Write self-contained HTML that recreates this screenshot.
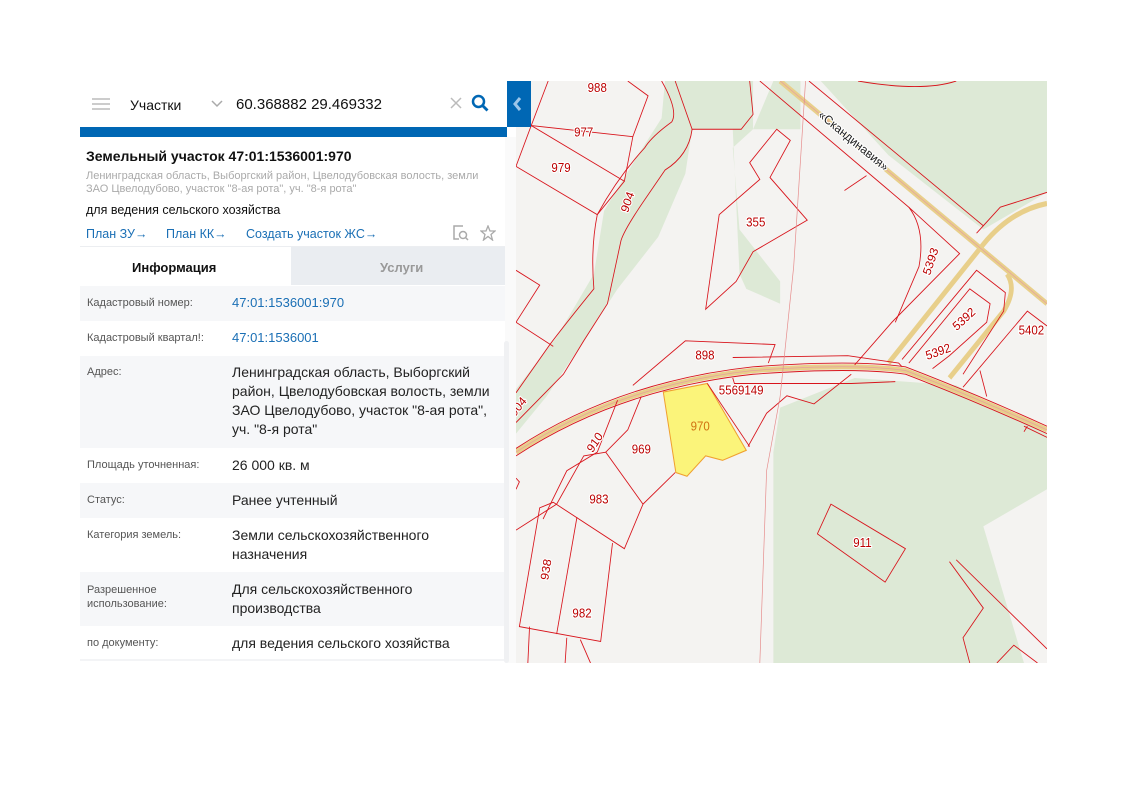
<!DOCTYPE html>
<html><head><meta charset="utf-8"><style>
*{box-sizing:border-box;margin:0;padding:0}
body{width:1122px;height:793px;background:#fff;position:relative;overflow:hidden;font-family:"Liberation Sans",sans-serif}
#map{position:absolute;left:516px;top:81px;width:531px;height:582px;background:#f4f3f1;overflow:hidden}
#panel{position:absolute;left:80px;top:81px;width:436px;height:582px;background:#fff;overflow:hidden}
.search{height:46px;background:#fff;position:relative;width:427px}
.blue{position:absolute;left:0;top:46px;width:427px;height:10px;background:#0067b4}
.coll{position:absolute;left:507px;top:81px;width:24px;height:46px;background:#0067b4}
.t{position:absolute;white-space:nowrap}
.row{position:absolute;left:0;width:425px}
.g{background:#f6f7f9}
.lab{position:absolute;left:7px;font-size:11px;color:#555}
.val{position:absolute;left:152px;font-size:14px;color:#222;line-height:19px}
.lnk{color:#1a6fb5}
</style></head><body>
<div id="map">
<svg width="531" height="582" viewBox="0 0 1568 1568" preserveAspectRatio="none">
<g fill="#dde9d6">
<path d="M440 0 L700 0 L700 130 L520 130 L500 250 L420 420 L300 560 L200 700 L90 850 L0 950 L0 830 L120 690 L230 520 L260 350 L360 200 L430 100Z"/>
<path d="M640 130 L840 130 L840 0 L760 0 L700 130 L640 180 L660 400 L780 540 L780 600 L680 560 L660 520 Z"/>
<path d="M900 0 L1568 0 L1568 300 L1380 400 L1100 200 Z"/>
<path d="M780 880 L1000 800 L1300 820 L1568 950 L1568 1568 L760 1568 L760 1000 Z"/>
</g>
<path d="M1380 1200 L1568 1100 L1568 1568 L1500 1568 Z" fill="#f4f3f1"/>
<g fill="none" stroke="#e8cf8a" stroke-width="14">
<path d="M0 1000 Q300 820 700 780 Q1000 760 1150 780 Q1350 850 1568 940"/>
<path d="M780 0 L1568 600"/>
<path d="M1100 760 L1380 440 Q1460 350 1568 330"/>
<path d="M1280 800 L1440 620 Q1480 560 1450 520"/>
</g>
<g fill="none" stroke="#e6a0a0" stroke-width="2"><path d="M0 1000 Q300 820 700 780 Q1000 760 1150 780 Q1350 850 1568 940"/><path d="M780 0 L1568 600"/></g>
<path d="M435 838 L565 815 L680 995 L610 1022 L560 1010 L505 1065 L472 1055 Z" fill="#fbf47a" stroke="#f0a030" stroke-width="3"/>
<g fill="none" stroke="#d8141c" stroke-width="2.5">
<path d="M95 0 L45 120 L0 230"/><path d="M45 120 L345 150 L390 40 L330 0"/><path d="M0 230 L240 360 L320 270 L45 120"/><path d="M345 150 L320 270"/>
<path d="M430 0 Q480 80 460 110 Q400 150 380 180 Q300 260 240 360 Q220 450 230 560 Q150 650 100 710 L0 840"/>
<path d="M0 510 L70 550 L0 650 L110 715"/>
<path d="M470 0 L520 130 L665 130 L700 90 L690 0"/>
<path d="M520 130 Q510 200 440 240 L380 320 Q320 400 310 430 L270 600 L200 700 L140 790 L0 920"/>
<path d="M560 615 L600 360 L720 265 L690 220 L770 130 L810 160 L750 260 L860 375 L700 460 L650 540 Z"/>
<path d="M720 0 L1160 340 L1310 465 L1110 650 L1000 765"/>
<path d="M865 0 L1380 390 L1360 410"/><path d="M1380 390 L1430 340 L1568 300"/>
<path d="M1160 340 Q1210 400 1190 500 L1120 650"/>
<path d="M1010 0 Q1200 30 1300 0"/>
<path d="M1140 750 L1360 510 L1445 570 L1440 620 L1320 790"/><path d="M1160 760 L1340 560 L1400 600 L1390 650 L1280 740 L1230 775"/>
<path d="M1320 825 L1510 620 L1568 660"/><path d="M1370 780 L1390 850"/>
<path d="M345 820 L500 700 L765 710 L745 760"/>
<path d="M640 745 L980 740 L1130 760 L1140 770"/>
<path d="M640 800 L645 815 L990 815 L1120 810"/>
<path d="M0 1010 Q300 830 700 790 Q1000 770 1150 790 Q1350 860 1568 950"/>
<path d="M0 990 Q300 810 700 770 Q1000 750 1150 770 Q1350 840 1568 930"/>
<path d="M990 790 L880 870 L800 848 L740 895 L685 985"/>
<path d="M565 815 L690 985"/>
<path d="M370 850 L330 940 L265 1000 L375 1140 L470 1055"/><path d="M265 1000 L200 1010 L120 1140 L0 1210"/><path d="M300 860 L240 1000 L150 1050 L80 1180"/>
<path d="M375 1140 L320 1260 L110 1135 L70 1150 L10 1470 L250 1510 L285 1245"/><path d="M180 1175 L120 1490"/>
<path d="M40 1470 L35 1568"/><path d="M150 1500 L145 1568"/><path d="M190 1505 L220 1568"/>
<path d="M930 1140 L1150 1260 L1090 1350 L890 1220 Z" stroke-linejoin="round"/>
<path d="M1280 1295 L1380 1420 L1320 1500 L1340 1568"/><path d="M1300 1290 L1568 1530"/><path d="M1420 1568 L1470 1520 L1540 1568"/>
<path d="M1500 930 L1568 960"/><path d="M1510 930 L1500 945"/>
<path d="M0 1070 L10 1080 L0 1100"/>
<path d="M970 295 L1035 255"/>
</g>
<path d="M855 0 L820 500 L780 850 L740 1050 L720 1568" fill="none" stroke="#e58a8a" stroke-width="2"/>
<g font-family="Liberation Sans,sans-serif" font-size="34" fill="#b00" text-anchor="middle" stroke="#fff" stroke-width="6" paint-order="stroke">
<text x="240" y="30">988</text><text x="200" y="150">977</text><text x="133" y="245">979</text>
<text x="708" y="392">355</text><text x="558" y="750">898</text><text x="665" y="844">5569149</text>
<text x="544" y="942" fill="#d07010" stroke="none">970</text><text x="370" y="1003">969</text><text x="245" y="1138">983</text>
<text x="195" y="1446">982</text><text x="1023" y="1256">911</text><text x="1522" y="683">5402</text>
<text x="1250" y="740" transform="rotate(-18 1250 740)">5392</text>
<text x="1330" y="650" transform="rotate(-40 1330 650)">5392</text>
<text x="1235" y="490" transform="rotate(-70 1235 490)">5393</text>
<text x="340" y="330" transform="rotate(-70 340 330)">904</text>
<text x="242" y="980" transform="rotate(-55 242 980)">910</text>
<text x="100" y="1318" transform="rotate(-80 100 1318)">938</text>
<text x="15" y="885" transform="rotate(-50 15 885)">904</text>
<text x="990" y="170" fill="#222" transform="rotate(37 990 170)">«Скандинавия»</text>
</g>
</svg>
</div>
<div id="panel">
 <div class="search">
  <svg class="t" style="left:12px;top:16px" width="18" height="14"><g stroke="#ccc" stroke-width="2"><path d="M0 2H18M0 7H18M0 12H18"/></g></svg>
  <div class="t" style="left:50px;top:16px;font-size:14px;color:#111">Участки</div>
  <svg class="t" style="left:131px;top:19px" width="12" height="8"><path d="M1 1L6 6L11 1" stroke="#aaa" stroke-width="1.5" fill="none"/></svg>
  <div class="t" style="left:156px;top:15px;font-size:15px;color:#111">60.368882 29.469332</div>
  <svg class="t" style="left:370px;top:16px" width="12" height="12"><path d="M1 1L11 11M11 1L1 11" stroke="#bbb" stroke-width="1.5"/></svg>
  <svg class="t" style="left:391px;top:13px" width="18" height="18"><circle cx="7.5" cy="7.5" r="5.5" stroke="#0067b4" stroke-width="2.5" fill="none"/><path d="M11.5 11.5L16.5 16.5" stroke="#0067b4" stroke-width="2.8"/></svg>
 </div>
 <div class="blue"></div>
 <div class="t" style="left:6px;top:67px;font-size:14px;font-weight:bold;color:#111">Земельный участок 47:01:1536001:970</div>
 <div class="t" style="left:6px;top:89px;font-size:11px;color:#aaa;line-height:13px">Ленинградская область, Выборгский район, Цвелодубовская волость, земли<br>ЗАО Цвелодубово, участок "8-ая рота", уч. "8-я рота"</div>
 <div class="t" style="left:6px;top:122px;font-size:12.5px;color:#111">для ведения сельского хозяйства</div>
 <div class="t lnk" style="left:6px;top:146px;font-size:12.5px">План ЗУ→</div>
 <div class="t lnk" style="left:86px;top:146px;font-size:12.5px">План КК→</div>
 <div class="t lnk" style="left:166px;top:146px;font-size:12.5px">Создать участок ЖС→</div>
 <svg class="t" style="left:373px;top:144px" width="16" height="16"><path d="M10 1H1V14H6" stroke="#aaa" stroke-width="1.5" fill="none"/><circle cx="10" cy="10" r="3.5" stroke="#aaa" stroke-width="1.5" fill="none"/><path d="M12.5 12.5L15 15" stroke="#aaa" stroke-width="1.5"/></svg>
 <svg class="t" style="left:400px;top:144px" width="16" height="16"><path d="M8 1L10 6H15L11 9.5L12.5 15L8 11.5L3.5 15L5 9.5L1 6H6Z" stroke="#aaa" stroke-width="1.3" fill="none"/></svg>
 <div class="row" style="top:165px;height:40px;border-top:1px solid #eceef1"></div>
 <div class="t" style="left:211px;top:166px;width:214px;height:38px;background:#eaedf1"></div>
 <div class="t" style="left:52px;top:179px;font-size:13px;font-weight:bold;color:#111">Информация</div>
 <div class="t" style="left:300px;top:179px;font-size:13px;font-weight:bold;color:#999">Услуги</div>
 <div class="row g" style="top:205px;height:35px"><div class="lab" style="top:11px">Кадастровый номер:</div><div class="val lnk" style="top:7px;font-size:13px">47:01:1536001:970</div></div>
 <div class="row" style="top:240px;height:35px"><div class="lab" style="top:11px">Кадастровый квартал!:</div><div class="val lnk" style="top:7px;font-size:13px">47:01:1536001</div></div>
 <div class="row g" style="top:275px;height:92px"><div class="lab" style="top:10px">Адрес:</div><div class="val" style="top:7px">Ленинградская область, Выборгский<br>район, Цвелодубовская волость, земли<br>ЗАО Цвелодубово, участок "8-ая рота",<br>уч. "8-я рота"</div></div>
 <div class="row" style="top:367px;height:35px"><div class="lab" style="top:11px">Площадь уточненная:</div><div class="val" style="top:8px">26 000 кв. м</div></div>
 <div class="row g" style="top:402px;height:35px"><div class="lab" style="top:11px">Статус:</div><div class="val" style="top:8px">Ранее учтенный</div></div>
 <div class="row" style="top:437px;height:54px"><div class="lab" style="top:11px">Категория земель:</div><div class="val" style="top:8px">Земли сельскохозяйственного<br>назначения</div></div>
 <div class="row g" style="top:491px;height:54px"><div class="lab" style="top:11px;line-height:14px">Разрешенное<br>использование:</div><div class="val" style="top:8px">Для сельскохозяйственного<br>производства</div></div>
 <div class="row" style="top:545px;height:35px;border-bottom:2px solid #f3f4f6"><div class="lab" style="top:11px">по документу:</div><div class="val" style="top:8px">для ведения сельского хозяйства</div></div>
 <div class="t" style="left:425px;top:56px;width:11px;height:526px;background:#fafafa"></div>
 <div class="t" style="left:424px;top:260px;width:5px;height:322px;background:#f0f1f3;border-radius:3px"></div>
</div>
<div class="coll"><svg width="24" height="46"><path d="M13 17 L8 23 L13 29" stroke="#9cc6ea" stroke-width="3" fill="none"/></svg></div>
</body></html>
